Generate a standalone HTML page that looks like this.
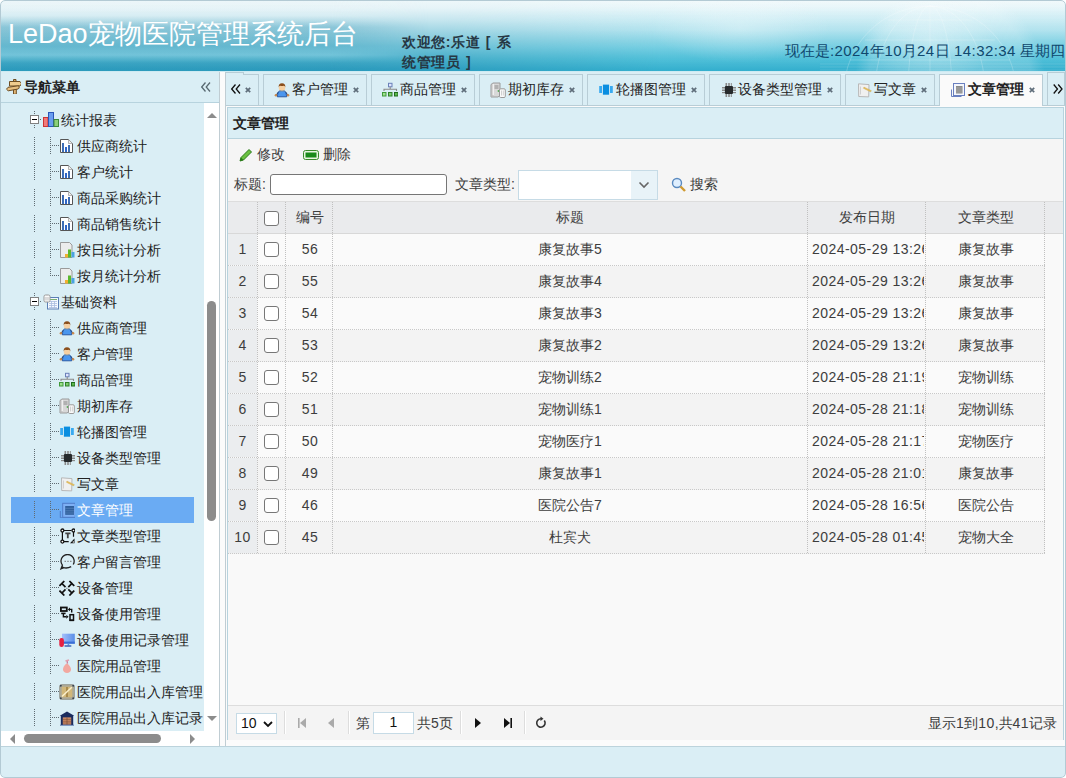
<!DOCTYPE html><html><head><meta charset="utf-8"><style>*{box-sizing:border-box;margin:0;padding:0}
html,body{width:1066px;height:778px;overflow:hidden;background:#fff}
body{font-family:"Liberation Sans",sans-serif;font-size:14px;color:#333;position:relative}
#frame{position:absolute;left:0;top:0;width:1066px;height:778px;border-radius:5px;overflow:hidden;background:#fbfbfb}
#bd{left:0;top:0;width:1066px;height:778px;border:1px solid #b3cad4;border-radius:5px}
#south{left:0;top:746px;width:1066px;height:32px;background:#daeef5;border-top:1px solid #bcd3dc}
#hl{left:0;top:71px;width:1066px;height:1px;background:#cdeaf2}
#cb{left:225px;top:72px;width:1px;height:674px;background:#c0cdd3}
#frame div,#frame span,#frame i{position:absolute;display:block}
#hdr{left:0;top:0;width:1066px;height:71px;
 background:linear-gradient(180deg,#eef8fa 0px,#e6f4f8 8px,#c6e6ef 20px,#9ad3e2 33px,#6cc0d6 48px,#46adc9 60px,#2f9fc0 69px,#2f9fc0 71px)}
#hdrL{left:0;top:0;width:430px;height:71px;background:linear-gradient(180deg,rgba(235,245,248,.3) 0,rgba(230,242,246,.25) 16px,rgba(60,150,180,.3) 27px,rgba(60,150,180,.25) 46px,rgba(200,240,250,.25) 55px,rgba(40,140,175,.15) 63px,rgba(20,120,160,.1) 71px);-webkit-mask-image:linear-gradient(90deg,#000 0,#000 330px,transparent 430px)}
#hdrR{left:440px;top:0;width:626px;height:71px;background:radial-gradient(circle 95px at 510px 80px,rgba(255,255,255,.28),rgba(255,255,255,.18) 85%,rgba(255,255,255,0) 100%),radial-gradient(ellipse 70px 40px at 490px 40px,rgba(255,255,255,.35),rgba(255,255,255,0)),radial-gradient(ellipse 90px 35px at 300px 28px,rgba(255,255,255,.3),rgba(255,255,255,0)),linear-gradient(180deg,rgba(255,255,255,.25) 0,rgba(200,245,252,.4) 30px,rgba(90,210,232,.5) 58px,rgba(60,195,222,.45) 71px);-webkit-mask-image:linear-gradient(90deg,transparent 0,#000 220px)}
#title{left:8px;top:16px;font-size:27px;color:#fff;white-space:nowrap}
#welcome{left:402px;top:32px;width:118px;font-size:14px;font-weight:bold;color:#263845;line-height:20px;letter-spacing:.6px;word-spacing:1px}
#now{left:785px;top:42px;font-size:15px;color:#10486e;white-space:nowrap}
#west{left:0;top:72px;width:220px;height:674px;background:#daeef5;border-right:1px solid #c0cdd3}
#westhd{left:0;top:0;width:219px;height:31px;border-bottom:1px solid #b7d3de}
#westhd .t{left:24px;top:7px;font-weight:bold;font-size:14px;color:#222}
#westhd .coll{left:201px;top:10px;width:10px;height:10px}
.coll svg{display:block}
#tree{left:0;top:31px;width:204px;height:628px;overflow:hidden}
#frame .ic{width:16px;height:16px}
#frame .ic svg{display:block}
.tt{height:26px;line-height:26px;white-space:nowrap;font-size:14px;color:#222}
.tt.on{color:#fff}
.selrow{left:11px;width:183px;height:26px;background:#6aabf3}
#frame i.vd{width:1px;background:repeating-linear-gradient(180deg,#5f6b72 0 1px,transparent 1px 2px)}
#frame i.hd{height:1px;background:repeating-linear-gradient(90deg,#5f6b72 0 1px,transparent 1px 2px)}
#vscroll{left:204px;top:31px;width:15px;height:628px;background:#fff}
#hscroll{left:0;top:659px;width:219px;height:15px;background:#fff}
.vthumb{left:3px;top:198px;width:9px;height:220px;border-radius:5px;background:#8c8c8c}
.hthumb{left:24px;top:3px;width:137px;height:9px;border-radius:5px;background:#8c8c8c}
#frame i.tri{width:0;height:0;border:5px solid transparent}
i.tri.up{left:3px;top:10px;border-bottom:5px solid #8c8c8c !important;border-top-width:0 !important}
i.tri.dn{left:3px;top:613px;border-top:5px solid #8c8c8c !important;border-bottom-width:0 !important}
i.tri.lf{left:10px;top:3px;border-right:5px solid #8c8c8c !important;border-left-width:0 !important}
i.tri.rt{left:190px;top:3px;border-left:5px solid #8c8c8c !important;border-right-width:0 !important}
#tabs{left:226px;top:72px;width:838px;height:674px;border-left:1px solid #b5d0dc}
#panel{left:0;top:34px;width:838px;height:634px;border:1px solid #b7d3de;background:#f9f9f9}
#tabstrip{left:226px;top:72px;width:839px;height:34px;background:#daeef5;border-bottom:1px solid #b8cdd6}
.tab{top:2px;height:31px;background:#daeef5;border:1px solid #b8cdd6;border-bottom:none;white-space:nowrap;font-size:14px;color:#222}
.tab .tx{left:28px;top:6px}
.tab.on{background:#fafafa;height:32px}
.tab.on .tx{font-weight:bold}
.tab .cls{top:12px;width:6px;height:6px}
.tab .cls svg{display:block}
.scl,.scr{top:0;width:18px;height:33px;border:1px solid #b8cdd6;border-bottom:none;background:#daeef5}
.scl .arr,.scr .arr{left:5px;top:11px;width:10px;height:10px}
.arr svg{display:block}
#pn{left:227px;top:107px;width:837px;height:633px;border:1px solid #b7d3de;border-bottom:none;background:#f9f9f9}
#pnhd{left:0;top:0;width:835px;height:31px;background:#daeef5;border-bottom:1px solid #b7d3de}
#pnhd .t{left:5px;top:7px;font-weight:bold;color:#222}
#tb{left:0;top:31px;width:835px;height:63px;background:#f5f5f5;border-bottom:1px solid #ddd}
.tl{white-space:nowrap;font-size:14px;color:#3d3d3d;line-height:20px}
.inp{background:#fff;border:1px solid #767676;border-radius:3px}
.combo{background:#fff;border:1px solid #c6dbe6}
.carr{right:0;top:0;width:26px;height:28px;background:#e8f3f8}
.carr svg{position:absolute;left:7px;top:10px}
#gh{left:0;top:94px;width:835px;height:32px;background:#eaebed;border-bottom:1px solid #d8d8d8}
#frame i.vdd{width:1px;background:repeating-linear-gradient(180deg,#c0c0c0 0 1px,transparent 1px 2px)}
#frame i.hdd{height:1px;background:repeating-linear-gradient(90deg,#c8c8c8 0 1px,transparent 1px 2px)}
.cb{width:15px;height:15px;border:1px solid #777;border-radius:3px;background:#fff}
.gt{top:0;height:31px;line-height:31px;text-align:center;font-size:14px;color:#3d3d3d;white-space:nowrap}
#gb{left:0;top:126px;width:835px;height:471px;background:#f9f9f9}
.gr{left:0;width:817px;height:32px}
.gr.odd{background:#fafafa}
.gr.even{background:#f3f3f3}
.rn{left:0;top:0;width:29px;height:31px;line-height:31px;text-align:center;background:#ebedef;color:#3d3d3d}
.gd{left:584px;top:0;width:112px;height:31px;line-height:31px;overflow:hidden;white-space:nowrap;color:#3d3d3d}
#pg{left:0;top:597px;width:835px;height:35px;background:#f4f4f4;border-top:1px solid #ddd}
.psel{width:41px;height:21px;border:1px solid #c6dbe6;background:#fff}
.psel span{font-size:14px;color:#111}
#frame i.psep{top:6px;width:2px;height:23px;border-left:1px solid #ddd;border-right:1px solid #fff}
.pinp{width:41px;height:22px;border:1px solid #c6dbe6;background:#fff}
.pinp span{left:0;width:39px;top:1px;text-align:center;color:#111}
.pinfo{right:6px;top:8px}

em{font-style:normal}
em.d{letter-spacing:.45px}
em.n{letter-spacing:.4px}
</style></head><body><div id="frame"><div id="hdr"><div id="hdrL"></div><div id="hdrR"></div><svg style="position:absolute;left:820px;top:0" width="246" height="71" viewBox="0 0 246 71"><g fill="none" stroke="#fff" stroke-opacity=".2" stroke-width="1"><circle cx="110" cy="92" r="86"/><ellipse cx="110" cy="92" rx="55" ry="86"/><ellipse cx="110" cy="92" rx="22" ry="86"/><path d="M110 6v70M30 60h160M45 40h130M68 20h84"/></g><g stroke="#fff" stroke-opacity=".12" stroke-width="1"><path d="M0 64h246M0 67h246M0 70h246"/></g></svg>
  <div id="title">LeDao宠物医院管理系统后台</div>
  <div id="welcome">欢迎您:乐道 [ 系统管理员 ]</div>
  <div id="now">现在是<em class="n">:2024</em>年<em class="n">10</em>月<em class="n">24</em>日<em class="n"> 14:32:34 </em>星期四</div>
</div>
<div id="west"><div id="westhd"><span class="ic" style="left:5px;top:6px"><svg width="16" height="16" viewBox="0 0 16 16"><g stroke="#6e4e24" stroke-width="1" stroke-linejoin="round"><rect x="8.5" y="1.5" width="2.5" height="3" fill="#d9a860"/><rect x="8.5" y="11" width="2.8" height="5.2" fill="#e2b878"/><path d="M4.5 3.5h10.5l1.5 2.2-1.5 2.3H4.5z" fill="#f0cc8e"/><path d="M1.5 11.2L3 9.3l10.8-1.6.4 2.3-1 1-10 1.8z" fill="#e8bf80"/></g></svg></span><div class="t">导航菜单</div><div class="coll"><svg width="10" height="10" viewBox="0 0 10 10"><path d="M4.5 .5L.7 5l3.8 4.5M9 .5L5.2 5 9 9.5" fill="none" stroke="#5a6a72" stroke-width="1.3"/></svg></div></div><div id="tree"><span class="ic" style="left:30px;top:12px;width:9px;height:9px"><svg width="9" height="9" viewBox="0 0 9 9"><rect x="0.5" y="0.5" width="8" height="8" fill="#fff" stroke="#808080" stroke-width="1"/><path d="M2 4.5h5" stroke="#000" stroke-width="1"/></svg></span><i class="vd" style="left:34px;top:8px;height:3px"></i><i class="vd" style="left:34px;top:22px;height:3px"></i><i class="hd" style="left:40px;top:16px;width:1px"></i><span class="ic" style="left:43px;top:9px"><svg width="16" height="16" viewBox="0 0 16 16"><rect x="0.5" y="5.5" width="4.5" height="9" fill="#f07a7a" stroke="#c33" stroke-width="1"/><rect x="5.5" y="0.5" width="5" height="14" fill="#6a9ef0" stroke="#2a56b8" stroke-width="1"/><rect x="11" y="7.5" width="4.5" height="7" fill="#8ccf7a" stroke="#3f8a3a" stroke-width="1"/></svg></span><span class="tt" style="left:61px;top:4px">统计报表</span><i class="vd" style="left:34px;top:34px;height:17px"></i><i class="vd" style="left:50px;top:34px;height:17px"></i><i class="hd" style="left:52px;top:42px;width:7px"></i><span class="ic" style="left:59px;top:35px"><svg width="16" height="16" viewBox="0 0 16 16"><path d="M1.5 1.5h8l4 4v9h-12z" fill="#fff" stroke="#555" stroke-width="1"/><path d="M9.5 1.5v4h4" fill="#eee" stroke="#888" stroke-width=".6"/><rect x="3" y="5" width="2" height="9" fill="#3c6db5"/><rect x="6" y="9" width="2" height="5" fill="#2f66c8"/><rect x="9" y="7" width="2" height="7" fill="#3c6db5"/></svg></span><span class="tt" style="left:77px;top:30px">供应商统计</span><i class="vd" style="left:34px;top:60px;height:17px"></i><i class="vd" style="left:50px;top:60px;height:17px"></i><i class="hd" style="left:52px;top:68px;width:7px"></i><span class="ic" style="left:59px;top:61px"><svg width="16" height="16" viewBox="0 0 16 16"><path d="M1.5 1.5h8l4 4v9h-12z" fill="#fff" stroke="#555" stroke-width="1"/><path d="M9.5 1.5v4h4" fill="#eee" stroke="#888" stroke-width=".6"/><rect x="3" y="5" width="2" height="9" fill="#3c6db5"/><rect x="6" y="9" width="2" height="5" fill="#2f66c8"/><rect x="9" y="7" width="2" height="7" fill="#3c6db5"/></svg></span><span class="tt" style="left:77px;top:56px">客户统计</span><i class="vd" style="left:34px;top:86px;height:17px"></i><i class="vd" style="left:50px;top:86px;height:17px"></i><i class="hd" style="left:52px;top:94px;width:7px"></i><span class="ic" style="left:59px;top:87px"><svg width="16" height="16" viewBox="0 0 16 16"><path d="M1.5 1.5h8l4 4v9h-12z" fill="#fff" stroke="#555" stroke-width="1"/><path d="M9.5 1.5v4h4" fill="#eee" stroke="#888" stroke-width=".6"/><rect x="3" y="5" width="2" height="9" fill="#3c6db5"/><rect x="6" y="9" width="2" height="5" fill="#2f66c8"/><rect x="9" y="7" width="2" height="7" fill="#3c6db5"/></svg></span><span class="tt" style="left:77px;top:82px">商品采购统计</span><i class="vd" style="left:34px;top:112px;height:17px"></i><i class="vd" style="left:50px;top:112px;height:17px"></i><i class="hd" style="left:52px;top:120px;width:7px"></i><span class="ic" style="left:59px;top:113px"><svg width="16" height="16" viewBox="0 0 16 16"><path d="M1.5 1.5h8l4 4v9h-12z" fill="#fff" stroke="#555" stroke-width="1"/><path d="M9.5 1.5v4h4" fill="#eee" stroke="#888" stroke-width=".6"/><rect x="3" y="5" width="2" height="9" fill="#3c6db5"/><rect x="6" y="9" width="2" height="5" fill="#2f66c8"/><rect x="9" y="7" width="2" height="7" fill="#3c6db5"/></svg></span><span class="tt" style="left:77px;top:108px">商品销售统计</span><i class="vd" style="left:34px;top:138px;height:17px"></i><i class="vd" style="left:50px;top:138px;height:17px"></i><i class="hd" style="left:52px;top:146px;width:7px"></i><span class="ic" style="left:59px;top:139px"><svg width="16" height="16" viewBox="0 0 16 16"><path d="M1.5 0.5h9l2.5 2.5v12.5h-11.5z" fill="#ececec" stroke="#9a9a9a" stroke-width="1"/><rect x="6" y="12" width="3" height="3.5" fill="#f0b030"/><rect x="9" y="7.5" width="3" height="8" fill="#5cb82e"/><rect x="12.5" y="10" width="3" height="5.5" fill="#4aa3e0"/></svg></span><span class="tt" style="left:77px;top:134px">按日统计分析</span><i class="vd" style="left:34px;top:164px;height:17px"></i><i class="vd" style="left:50px;top:164px;height:9px"></i><i class="hd" style="left:52px;top:172px;width:7px"></i><span class="ic" style="left:59px;top:165px"><svg width="16" height="16" viewBox="0 0 16 16"><path d="M1.5 0.5h9l2.5 2.5v12.5h-11.5z" fill="#ececec" stroke="#9a9a9a" stroke-width="1"/><rect x="6" y="12" width="3" height="3.5" fill="#f0b030"/><rect x="9" y="7.5" width="3" height="8" fill="#5cb82e"/><rect x="12.5" y="10" width="3" height="5.5" fill="#4aa3e0"/></svg></span><span class="tt" style="left:77px;top:160px">按月统计分析</span><span class="ic" style="left:30px;top:194px;width:9px;height:9px"><svg width="9" height="9" viewBox="0 0 9 9"><rect x="0.5" y="0.5" width="8" height="8" fill="#fff" stroke="#808080" stroke-width="1"/><path d="M2 4.5h5" stroke="#000" stroke-width="1"/></svg></span><i class="vd" style="left:34px;top:190px;height:3px"></i><i class="vd" style="left:34px;top:204px;height:3px"></i><i class="hd" style="left:40px;top:198px;width:1px"></i><span class="ic" style="left:43px;top:191px"><svg width="16" height="16" viewBox="0 0 16 16"><rect x="4.5" y="3.5" width="11" height="11.5" fill="#f4f9ff" stroke="#5b7fb5" stroke-width="1"/><path d="M6 5.5h8" stroke="#7ab070"/><path d="M6 7.5h8M6 9.5h8M6 11.5h8M6 13.5h8M8.5 7v7M11.5 7v7" stroke="#a9bde0" stroke-width=".8"/><rect x="1" y="1" width="6" height="7" rx="1.5" fill="#fafafa" stroke="#999" stroke-width="1"/><path d="M3 3v3.5M5 3v3.5" stroke="#bbb"/></svg></span><span class="tt" style="left:61px;top:186px">基础资料</span><i class="vd" style="left:34px;top:216px;height:17px"></i><i class="vd" style="left:50px;top:216px;height:17px"></i><i class="hd" style="left:52px;top:224px;width:7px"></i><span class="ic" style="left:59px;top:217px"><svg width="16" height="16" viewBox="0 0 16 16"><path d="M3.3 14.8l.8-4.6c1-1.2 2.3-1.8 3.9-1.8s2.9.6 3.9 1.8l.8 4.6z" fill="#4a96ee" stroke="#1f4f9c" stroke-width=".9"/><path d="M4.2 10.3l-2.2 3M11.8 10.3l2.2 3" stroke="#24406e" stroke-width="1"/><circle cx="1.9" cy="13.2" r="1.2" fill="#c98a4e"/><circle cx="14.1" cy="13.2" r="1.2" fill="#c98a4e"/><ellipse cx="8" cy="6" rx="3.2" ry="2.9" fill="#f6d0a2"/><path d="M4.6 5.6C4.4 2.7 5.8 1.2 8 1.2s3.6 1.5 3.4 4.4c-.3-1.2-.9-1.6-1.6-1.8-1.2.4-2.6.4-3.6 0-.7.2-1.3.6-1.6 1.8z" fill="#8a4d1a"/><path d="M5.5 9h5" stroke="#7a8a9a" stroke-width=".8"/></svg></span><span class="tt" style="left:77px;top:212px">供应商管理</span><i class="vd" style="left:34px;top:242px;height:17px"></i><i class="vd" style="left:50px;top:242px;height:17px"></i><i class="hd" style="left:52px;top:250px;width:7px"></i><span class="ic" style="left:59px;top:243px"><svg width="16" height="16" viewBox="0 0 16 16"><path d="M3.3 14.8l.8-4.6c1-1.2 2.3-1.8 3.9-1.8s2.9.6 3.9 1.8l.8 4.6z" fill="#4a96ee" stroke="#1f4f9c" stroke-width=".9"/><path d="M4.2 10.3l-2.2 3M11.8 10.3l2.2 3" stroke="#24406e" stroke-width="1"/><circle cx="1.9" cy="13.2" r="1.2" fill="#c98a4e"/><circle cx="14.1" cy="13.2" r="1.2" fill="#c98a4e"/><ellipse cx="8" cy="6" rx="3.2" ry="2.9" fill="#f6d0a2"/><path d="M4.6 5.6C4.4 2.7 5.8 1.2 8 1.2s3.6 1.5 3.4 4.4c-.3-1.2-.9-1.6-1.6-1.8-1.2.4-2.6.4-3.6 0-.7.2-1.3.6-1.6 1.8z" fill="#8a4d1a"/><path d="M5.5 9h5" stroke="#7a8a9a" stroke-width=".8"/></svg></span><span class="tt" style="left:77px;top:238px">客户管理</span><i class="vd" style="left:34px;top:268px;height:17px"></i><i class="vd" style="left:50px;top:268px;height:17px"></i><i class="hd" style="left:52px;top:276px;width:7px"></i><span class="ic" style="left:59px;top:269px"><svg width="16" height="16" viewBox="0 0 16 16"><rect x="6.5" y="1.3" width="3.5" height="3.5" fill="#dde4ff" stroke="#6a80b8" stroke-width="1"/><path d="M8.2 4.8v2.5M2 9V7.3h12.5V9" fill="none" stroke="#8a8a8a" stroke-width="1.1"/><g stroke-width="1"><rect x="0.5" y="10.5" width="3.5" height="3.5" fill="#9ee08e" stroke="#3f9a3a"/><rect x="6.5" y="10.5" width="3.5" height="3.5" fill="#7ccc6c" stroke="#2e802a"/><rect x="12.5" y="10.5" width="3.5" height="3.5" fill="#5cb84e" stroke="#1e6a1c"/></g></svg></span><span class="tt" style="left:77px;top:264px">商品管理</span><i class="vd" style="left:34px;top:294px;height:17px"></i><i class="vd" style="left:50px;top:294px;height:17px"></i><i class="hd" style="left:52px;top:302px;width:7px"></i><span class="ic" style="left:59px;top:295px"><svg width="16" height="16" viewBox="0 0 16 16"><path d="M1 2.5L3 1h7v12.5L8 15H1z" fill="#d8d8d8" stroke="#9a9a9a" stroke-width="1"/><path d="M3 1v12.5L1 15" fill="none" stroke="#b8b8b8" stroke-width=".8"/><path d="M4.5 4h4M4.5 6h4" stroke="#8a8a8a" stroke-width="1"/><path d="M3.3 2v11" stroke="#f4f4f4" stroke-width="1.2"/><circle cx="8.5" cy="9" r=".9" fill="#5a5"/><rect x="9.5" y="6.8" width="5.8" height="8.7" rx="1.2" fill="#fafafa" stroke="#9a9a9a" stroke-width="1"/><path d="M11.5 8.5v5M13.3 8.5v5" stroke="#d0d0d0" stroke-width="1"/></svg></span><span class="tt" style="left:77px;top:290px">期初库存</span><i class="vd" style="left:34px;top:320px;height:17px"></i><i class="vd" style="left:50px;top:320px;height:17px"></i><i class="hd" style="left:52px;top:328px;width:7px"></i><span class="ic" style="left:59px;top:321px"><svg width="16" height="16" viewBox="0 0 16 16"><rect x="1.2" y="4" width="2.8" height="7" fill="#38aaf0"/><rect x="12" y="4" width="2.8" height="7" fill="#38aaf0"/><rect x="4.9" y="2.6" width="6.2" height="10.1" fill="#0a8ee0"/></svg></span><span class="tt" style="left:77px;top:316px">轮播图管理</span><i class="vd" style="left:34px;top:346px;height:17px"></i><i class="vd" style="left:50px;top:346px;height:17px"></i><i class="hd" style="left:52px;top:354px;width:7px"></i><span class="ic" style="left:59px;top:347px"><svg width="16" height="16" viewBox="0 0 16 16"><g fill="#8a8a8a"><rect x="5.5" y="1" width="1.6" height="3"/><rect x="8.2" y="1" width="1.6" height="3"/><rect x="10.8" y="1" width="1" height="3"/><rect x="5.5" y="12" width="1.6" height="3"/><rect x="8.2" y="12" width="1.6" height="3"/><rect x="10.8" y="12" width="1" height="3"/><rect x="2" y="5" width="3" height="1.5"/><rect x="2" y="7.5" width="3" height="1.5"/><rect x="2" y="10" width="3" height="1.2"/><rect x="13" y="5" width="3" height="1.5"/><rect x="13" y="7.5" width="3" height="1.5"/><rect x="13" y="10" width="3" height="1.2"/></g><rect x="4.9" y="4" width="8.1" height="8" rx="1" fill="#262a2c"/></svg></span><span class="tt" style="left:77px;top:342px">设备类型管理</span><i class="vd" style="left:34px;top:372px;height:17px"></i><i class="vd" style="left:50px;top:372px;height:17px"></i><i class="hd" style="left:52px;top:380px;width:7px"></i><span class="ic" style="left:59px;top:373px"><svg width="16" height="16" viewBox="0 0 16 16"><path d="M2.5 1.8l10.5 .8-.3 12.3-10-.4z" fill="#f0f0f0" stroke="#b8b8b8" stroke-width="1"/><path d="M4.5 4.5v8" stroke="#d0d0d0" stroke-width="1"/><path d="M8 5.2l7.3 3.5-.7 1.1-7.2-3.6z" fill="#ecc860" stroke="#caa040" stroke-width=".5"/></svg></span><span class="tt" style="left:77px;top:368px">写文章</span><div class="selrow" style="top:394px"></div><i class="vd" style="left:34px;top:398px;height:17px"></i><i class="vd" style="left:50px;top:398px;height:17px"></i><i class="hd" style="left:52px;top:406px;width:7px"></i><span class="ic" style="left:59px;top:399px"><svg width="16" height="16" viewBox="0 0 16 16"><rect x="3.7" y="1.3" width="12.6" height="14" fill="#7eb0f4" stroke="#4f7cc8" stroke-width="1"/><path d="M1.3 9v6.8h14.9" fill="none" stroke="#4f7cc8" stroke-width="1"/><rect x="6.2" y="4" width="8.8" height="8.8" fill="#2f5f9c"/><path d="M6.2 6.3h8.8M6.2 8.8h8.8M6.2 11h8.8" stroke="#5a86bd" stroke-width=".7"/></svg></span><span class="tt on" style="left:77px;top:394px">文章管理</span><i class="vd" style="left:34px;top:424px;height:17px"></i><i class="vd" style="left:50px;top:424px;height:17px"></i><i class="hd" style="left:52px;top:432px;width:7px"></i><span class="ic" style="left:59px;top:425px"><svg width="16" height="16" viewBox="0 0 16 16"><g fill="none" stroke="#111" stroke-width="1.2"><path d="M3.4 2.5h9.1M3.4 2.5v11.1M3.4 13.6h6.3M14.5 2.5v6.2"/></g><g fill="#fff" stroke="#111" stroke-width="1.3"><circle cx="3.4" cy="2.5" r="1.5"/><circle cx="14.5" cy="2.5" r="1.5"/><circle cx="3.4" cy="13.6" r="1.5"/></g><path d="M11 15.2h4.5v-4.6z" fill="#111"/><circle cx="14.3" cy="14" r=".7" fill="#fff"/><path d="M6.3 5.3h5.2M8.8 5.3v5" stroke="#444" stroke-width="1.8"/></svg></span><span class="tt" style="left:77px;top:420px">文章类型管理</span><i class="vd" style="left:34px;top:450px;height:17px"></i><i class="vd" style="left:50px;top:450px;height:17px"></i><i class="hd" style="left:52px;top:458px;width:7px"></i><span class="ic" style="left:59px;top:451px"><svg width="16" height="16" viewBox="0 0 16 16"><path d="M14.2 10.5A6.6 6.6 0 1 0 3.4 11.2L2 14.8 4.6 13.6Q8 14.8 12.2 12.6" fill="none" stroke="#222" stroke-width="1.3"/><path d="M2 14.8l1.6-3 1.5 2.2z" fill="#222"/><path d="M5.6 7.4h1.2M8.4 7.4h1.2M11.2 7.4h1.2" stroke="#777" stroke-width="1.1"/></svg></span><span class="tt" style="left:77px;top:446px">客户留言管理</span><i class="vd" style="left:34px;top:476px;height:17px"></i><i class="vd" style="left:50px;top:476px;height:17px"></i><i class="hd" style="left:52px;top:484px;width:7px"></i><span class="ic" style="left:59px;top:477px"><svg width="16" height="16" viewBox="0 0 16 16"><g stroke="#111" stroke-width="1.7" fill="none" stroke-linecap="square"><path d="M1 5.3L4.7 1.6M2.9 3.5l3 3"/><path d="M11 1.6l3.7 3.7M12.9 3.5l-3 3"/><path d="M1 11.2l3.7 3.7M2.9 13l3-3"/><path d="M11 14.9l3.7-3.7M12.9 13l-3-3"/></g><rect x="7.3" y="7.7" width="1.2" height="1.2" fill="#777"/></svg></span><span class="tt" style="left:77px;top:472px">设备管理</span><i class="vd" style="left:34px;top:502px;height:17px"></i><i class="vd" style="left:50px;top:502px;height:17px"></i><i class="hd" style="left:52px;top:510px;width:7px"></i><span class="ic" style="left:59px;top:503px"><svg width="16" height="16" viewBox="0 0 16 16"><g fill="none" stroke="#111"><rect x="1.9" y="1.5" width="5.9" height="3.5" stroke-width="1.8"/><path d="M2.2 7.4h4.4" stroke-width="1.6"/><rect x="11" y="8.7" width="3.5" height="5.6" stroke-width="1.5"/><path d="M10.6 3.4h2.1v3" stroke-width="1.4"/><path d="M4.4 8v2.8h3" stroke-width="1.4"/></g><path d="M8.8 3.4l2.2-1.9v3.8z" fill="#111"/><path d="M9.6 10.8L7.3 8.9v3.8z" fill="#111"/><rect x="10.5" y="13.5" width="4.4" height="1.6" fill="#111"/></svg></span><span class="tt" style="left:77px;top:498px">设备使用管理</span><i class="vd" style="left:34px;top:528px;height:17px"></i><i class="vd" style="left:50px;top:528px;height:17px"></i><i class="hd" style="left:52px;top:536px;width:7px"></i><span class="ic" style="left:59px;top:529px"><svg width="16" height="16" viewBox="0 0 16 16"><defs><linearGradient id="mg" x1="0" x2="1"><stop offset="0" stop-color="#a4c0fa"/><stop offset="1" stop-color="#5a8ee8"/></linearGradient></defs><rect x="3" y="1.7" width="12.8" height="10" fill="url(#mg)"/><rect x="3" y="9.6" width="12.8" height="2.1" fill="#3a6ed4"/><path d="M9.4 11.7v1.8" stroke="#5a8ee8" stroke-width="1.6"/><rect x="5.3" y="13.2" width="7.2" height="1.6" rx=".8" fill="#3a62b8"/><rect x="0.3" y="6" width="4.6" height="9" rx="2.2" fill="#e62040"/></svg></span><span class="tt" style="left:77px;top:524px">设备使用记录管理</span><i class="vd" style="left:34px;top:554px;height:17px"></i><i class="vd" style="left:50px;top:554px;height:17px"></i><i class="hd" style="left:52px;top:562px;width:7px"></i><span class="ic" style="left:59px;top:555px"><svg width="16" height="16" viewBox="0 0 16 16"><path d="M7.5 5.5C5 7.5 4 9.5 4 11.5 4 13.5 6 15 8 15s4-1.5 4-3.5c0-2-1.5-4-3.5-6z" fill="#f2a8a0"/><path d="M8.5 5.5L8 2.5" stroke="#c87a9a" stroke-width="1.3"/><path d="M6.5 3l3.5-1" stroke="#e0a0b0" stroke-width="1.6"/></svg></span><span class="tt" style="left:77px;top:550px">医院用品管理</span><i class="vd" style="left:34px;top:580px;height:17px"></i><i class="vd" style="left:50px;top:580px;height:17px"></i><i class="hd" style="left:52px;top:588px;width:7px"></i><span class="ic" style="left:59px;top:581px"><svg width="16" height="16" viewBox="0 0 16 16"><rect x="0.8" y="0.8" width="14.4" height="14.4" rx="1.5" fill="#b8b4a0" stroke="#8a8a80" stroke-width="1"/><rect x="2.8" y="2.8" width="10.4" height="10.4" fill="#a88a4c"/><path d="M4 3v10M6 3v10M10 3v10M12 3v10" stroke="#f2dca0" stroke-width="1.1"/><path d="M3 12.5L12.8 3.2" stroke="#fbf0cc" stroke-width="1.5"/><g fill="#3a4450"><circle cx="1.8" cy="1.8" r="1"/><circle cx="14.2" cy="1.8" r="1"/><circle cx="1.8" cy="14.2" r="1"/><circle cx="14.2" cy="14.2" r="1"/></g></svg></span><span class="tt" style="left:77px;top:576px">医院用品出入库管理</span><i class="vd" style="left:34px;top:606px;height:17px"></i><i class="vd" style="left:50px;top:606px;height:17px"></i><i class="hd" style="left:52px;top:614px;width:7px"></i><span class="ic" style="left:59px;top:607px"><svg width="16" height="16" viewBox="0 0 16 16"><path d="M0.8 5.8L8 1.6l7.2 4.2-1 .3V15H1.8V6.1z" fill="#1b2c5e"/><rect x="3.8" y="7.4" width="8.4" height="7.3" fill="#d4906a"/><path d="M3.8 9.3h8.4M3.8 11.2h8.4M3.8 13h8.4M8 7.4v7.3" stroke="#7a4a30" stroke-width=".7"/><path d="M1 15.2h14" stroke="#3a5a9a" stroke-width=".8"/></svg></span><span class="tt" style="left:77px;top:602px">医院用品出入库记录</span></div><div id="vscroll"><i class="tri up"></i><div class="vthumb"></div><i class="tri dn"></i></div>
<div id="hscroll"><i class="tri lf"></i><div class="hthumb"></div><i class="tri rt"></i></div>
</div><div id="tabstrip"><div class="scl" style="left:-1px;width:19px"><span class="arr"><svg width="10" height="10" viewBox="0 0 10 10"><path d="M4.5 .5L.7 5l3.8 4.5M9 .5L5.2 5 9 9.5" fill="none" stroke="#111" stroke-width="1.3"/></svg></span></div><div class="tab" style="left:17px;width:16px;border-left:none"><span class="cls" style="left:2px"><svg width="6" height="6" viewBox="0 0 6 6"><path d="M.8 .8l4.4 4.4M5.2 .8L.8 5.2" stroke="#5f6d7a" stroke-width="1.7"/></svg></span></div><div class="tab" style="left:37px;width:104px"><span class="ic" style="left:10px;top:7px"><svg width="16" height="16" viewBox="0 0 16 16"><path d="M3.3 14.8l.8-4.6c1-1.2 2.3-1.8 3.9-1.8s2.9.6 3.9 1.8l.8 4.6z" fill="#4a96ee" stroke="#1f4f9c" stroke-width=".9"/><path d="M4.2 10.3l-2.2 3M11.8 10.3l2.2 3" stroke="#24406e" stroke-width="1"/><circle cx="1.9" cy="13.2" r="1.2" fill="#c98a4e"/><circle cx="14.1" cy="13.2" r="1.2" fill="#c98a4e"/><ellipse cx="8" cy="6" rx="3.2" ry="2.9" fill="#f6d0a2"/><path d="M4.6 5.6C4.4 2.7 5.8 1.2 8 1.2s3.6 1.5 3.4 4.4c-.3-1.2-.9-1.6-1.6-1.8-1.2.4-2.6.4-3.6 0-.7.2-1.3.6-1.6 1.8z" fill="#8a4d1a"/><path d="M5.5 9h5" stroke="#7a8a9a" stroke-width=".8"/></svg></span><span class="tx">客户管理</span><span class="cls" style="left:89px"><svg width="6" height="6" viewBox="0 0 6 6"><path d="M.8 .8l4.4 4.4M5.2 .8L.8 5.2" stroke="#5f6d7a" stroke-width="1.7"/></svg></span></div><div class="tab" style="left:145px;width:104px"><span class="ic" style="left:10px;top:7px"><svg width="16" height="16" viewBox="0 0 16 16"><rect x="6.5" y="1.3" width="3.5" height="3.5" fill="#dde4ff" stroke="#6a80b8" stroke-width="1"/><path d="M8.2 4.8v2.5M2 9V7.3h12.5V9" fill="none" stroke="#8a8a8a" stroke-width="1.1"/><g stroke-width="1"><rect x="0.5" y="10.5" width="3.5" height="3.5" fill="#9ee08e" stroke="#3f9a3a"/><rect x="6.5" y="10.5" width="3.5" height="3.5" fill="#7ccc6c" stroke="#2e802a"/><rect x="12.5" y="10.5" width="3.5" height="3.5" fill="#5cb84e" stroke="#1e6a1c"/></g></svg></span><span class="tx">商品管理</span><span class="cls" style="left:89px"><svg width="6" height="6" viewBox="0 0 6 6"><path d="M.8 .8l4.4 4.4M5.2 .8L.8 5.2" stroke="#5f6d7a" stroke-width="1.7"/></svg></span></div><div class="tab" style="left:253px;width:104px"><span class="ic" style="left:10px;top:7px"><svg width="16" height="16" viewBox="0 0 16 16"><path d="M1 2.5L3 1h7v12.5L8 15H1z" fill="#d8d8d8" stroke="#9a9a9a" stroke-width="1"/><path d="M3 1v12.5L1 15" fill="none" stroke="#b8b8b8" stroke-width=".8"/><path d="M4.5 4h4M4.5 6h4" stroke="#8a8a8a" stroke-width="1"/><path d="M3.3 2v11" stroke="#f4f4f4" stroke-width="1.2"/><circle cx="8.5" cy="9" r=".9" fill="#5a5"/><rect x="9.5" y="6.8" width="5.8" height="8.7" rx="1.2" fill="#fafafa" stroke="#9a9a9a" stroke-width="1"/><path d="M11.5 8.5v5M13.3 8.5v5" stroke="#d0d0d0" stroke-width="1"/></svg></span><span class="tx">期初库存</span><span class="cls" style="left:89px"><svg width="6" height="6" viewBox="0 0 6 6"><path d="M.8 .8l4.4 4.4M5.2 .8L.8 5.2" stroke="#5f6d7a" stroke-width="1.7"/></svg></span></div><div class="tab" style="left:361px;width:118px"><span class="ic" style="left:10px;top:7px"><svg width="16" height="16" viewBox="0 0 16 16"><rect x="1.2" y="4" width="2.8" height="7" fill="#38aaf0"/><rect x="12" y="4" width="2.8" height="7" fill="#38aaf0"/><rect x="4.9" y="2.6" width="6.2" height="10.1" fill="#0a8ee0"/></svg></span><span class="tx">轮播图管理</span><span class="cls" style="left:103px"><svg width="6" height="6" viewBox="0 0 6 6"><path d="M.8 .8l4.4 4.4M5.2 .8L.8 5.2" stroke="#5f6d7a" stroke-width="1.7"/></svg></span></div><div class="tab" style="left:483px;width:132px"><span class="ic" style="left:10px;top:7px"><svg width="16" height="16" viewBox="0 0 16 16"><g fill="#8a8a8a"><rect x="5.5" y="1" width="1.6" height="3"/><rect x="8.2" y="1" width="1.6" height="3"/><rect x="10.8" y="1" width="1" height="3"/><rect x="5.5" y="12" width="1.6" height="3"/><rect x="8.2" y="12" width="1.6" height="3"/><rect x="10.8" y="12" width="1" height="3"/><rect x="2" y="5" width="3" height="1.5"/><rect x="2" y="7.5" width="3" height="1.5"/><rect x="2" y="10" width="3" height="1.2"/><rect x="13" y="5" width="3" height="1.5"/><rect x="13" y="7.5" width="3" height="1.5"/><rect x="13" y="10" width="3" height="1.2"/></g><rect x="4.9" y="4" width="8.1" height="8" rx="1" fill="#262a2c"/></svg></span><span class="tx">设备类型管理</span><span class="cls" style="left:117px"><svg width="6" height="6" viewBox="0 0 6 6"><path d="M.8 .8l4.4 4.4M5.2 .8L.8 5.2" stroke="#5f6d7a" stroke-width="1.7"/></svg></span></div><div class="tab" style="left:619px;width:90px"><span class="ic" style="left:10px;top:7px"><svg width="16" height="16" viewBox="0 0 16 16"><path d="M2.5 1.8l10.5 .8-.3 12.3-10-.4z" fill="#f0f0f0" stroke="#b8b8b8" stroke-width="1"/><path d="M4.5 4.5v8" stroke="#d0d0d0" stroke-width="1"/><path d="M8 5.2l7.3 3.5-.7 1.1-7.2-3.6z" fill="#ecc860" stroke="#caa040" stroke-width=".5"/></svg></span><span class="tx">写文章</span><span class="cls" style="left:75px"><svg width="6" height="6" viewBox="0 0 6 6"><path d="M.8 .8l4.4 4.4M5.2 .8L.8 5.2" stroke="#5f6d7a" stroke-width="1.7"/></svg></span></div><div class="tab on" style="left:713px;width:104px"><span class="ic" style="left:10px;top:7px"><svg width="16" height="16" viewBox="0 0 16 16"><rect x="3.5" y="1.5" width="11" height="12" fill="#f4f6fc" stroke="#6a80c0" stroke-width="1"/><path d="M1.5 7.5v7h10" fill="none" stroke="#6a80c0" stroke-width="1"/><rect x="6" y="4" width="6.5" height="7.5" fill="#8a8a8a"/><path d="M6 6h6.5M6 8h6.5M6 10h6.5" stroke="#b8b8b8" stroke-width=".6"/></svg></span><span class="tx">文章管理</span><span class="cls" style="left:89px"><svg width="6" height="6" viewBox="0 0 6 6"><path d="M.8 .8l4.4 4.4M5.2 .8L.8 5.2" stroke="#5f6d7a" stroke-width="1.7"/></svg></span></div><div class="scr" style="left:821px"><span class="arr"><svg width="10" height="10" viewBox="0 0 10 10"><path d="M.7 .5L4.5 5 .7 9.5M5.2 .5L9 5 5.2 9.5" fill="none" stroke="#111" stroke-width="1.3"/></svg></span></div></div><div id="pn"><div id="pnhd"><span class="t">文章管理</span></div><div id="tb"><span class="ic" style="left:10px;top:8px"><svg width="16" height="16" viewBox="0 0 16 16"><path d="M2 14l1-3.5 8-8 2.5 2.5-8 8z" fill="#6ac040" stroke="#2a7a1a" stroke-width="1"/><path d="M2 14l1-3.5 2.5 2.5z" fill="#2a7a1a"/></svg></span><span class="tl" style="left:29px;top:5px">修改</span><span class="ic" style="left:75px;top:8px"><svg width="16" height="16" viewBox="0 0 16 16"><rect x="0.5" y="3.5" width="15" height="9" rx="2" fill="#e8f5e0" stroke="#3a8a2a" stroke-width="1"/><rect x="2.5" y="5.5" width="11" height="5" fill="#1a8a1a"/></svg></span><span class="tl" style="left:95px;top:5px">删除</span><span class="tl" style="left:6px;top:35px">标题:</span><div class="inp" style="left:42px;top:35px;width:177px;height:21px"></div><span class="tl" style="left:227px;top:35px">文章类型:</span><div class="combo" style="left:290px;top:31px;width:140px;height:30px"><div class="carr"><svg width="12" height="8" viewBox="0 0 12 8"><path d="M1.5 1.5l4.5 4.5 4.5-4.5" fill="none" stroke="#666" stroke-width="1.6"/></svg></div></div><span class="ic" style="left:443px;top:38px"><svg width="16" height="16" viewBox="0 0 16 16"><circle cx="6" cy="6" r="4.5" fill="#dfefff" stroke="#5a8ac0" stroke-width="1.4"/><path d="M9.5 9.5l4.5 4.5" stroke="#d09a30" stroke-width="2.4"/></svg></span><span class="tl" style="left:462px;top:35px">搜索</span></div><div id="gh"><i class="vdd" style="left:29px;top:0;height:32px"></i><i class="vdd" style="left:57px;top:0;height:32px"></i><i class="vdd" style="left:104px;top:0;height:32px"></i><i class="vdd" style="left:579px;top:0;height:32px"></i><i class="vdd" style="left:697px;top:0;height:32px"></i><i class="vdd" style="left:816px;top:0;height:32px"></i><span class="cb" style="left:36px;top:9px"></span><span class="gt" style="left:58px;width:48px">编号</span><span class="gt" style="left:105px;width:474px">标题</span><span class="gt" style="left:580px;width:118px">发布日期</span><span class="gt" style="left:698px;width:119px">文章类型</span></div><div id="gb"><div class="gr odd" style="top:0px"><span class="rn"><em class="d">1</em></span><span class="cb" style="left:36px;top:8px"></span><span class="gt" style="left:58px;width:48px"><em class="d">56</em></span><span class="gt" style="left:105px;width:474px">康复故事<em class="d">5</em></span><span class="gd"><em class="d">2024-05-29 13:26</em></span><span class="gt" style="left:698px;width:119px">康复故事</span><i class="vdd" style="left:29px;top:0;height:32px"></i><i class="vdd" style="left:57px;top:0;height:32px"></i><i class="vdd" style="left:104px;top:0;height:32px"></i><i class="vdd" style="left:579px;top:0;height:32px"></i><i class="vdd" style="left:697px;top:0;height:32px"></i><i class="vdd" style="left:816px;top:0;height:32px"></i><i class="hdd" style="left:0;top:31px;width:817px"></i></div><div class="gr even" style="top:32px"><span class="rn"><em class="d">2</em></span><span class="cb" style="left:36px;top:8px"></span><span class="gt" style="left:58px;width:48px"><em class="d">55</em></span><span class="gt" style="left:105px;width:474px">康复故事<em class="d">4</em></span><span class="gd"><em class="d">2024-05-29 13:26</em></span><span class="gt" style="left:698px;width:119px">康复故事</span><i class="vdd" style="left:29px;top:0;height:32px"></i><i class="vdd" style="left:57px;top:0;height:32px"></i><i class="vdd" style="left:104px;top:0;height:32px"></i><i class="vdd" style="left:579px;top:0;height:32px"></i><i class="vdd" style="left:697px;top:0;height:32px"></i><i class="vdd" style="left:816px;top:0;height:32px"></i><i class="hdd" style="left:0;top:31px;width:817px"></i></div><div class="gr odd" style="top:64px"><span class="rn"><em class="d">3</em></span><span class="cb" style="left:36px;top:8px"></span><span class="gt" style="left:58px;width:48px"><em class="d">54</em></span><span class="gt" style="left:105px;width:474px">康复故事<em class="d">3</em></span><span class="gd"><em class="d">2024-05-29 13:26</em></span><span class="gt" style="left:698px;width:119px">康复故事</span><i class="vdd" style="left:29px;top:0;height:32px"></i><i class="vdd" style="left:57px;top:0;height:32px"></i><i class="vdd" style="left:104px;top:0;height:32px"></i><i class="vdd" style="left:579px;top:0;height:32px"></i><i class="vdd" style="left:697px;top:0;height:32px"></i><i class="vdd" style="left:816px;top:0;height:32px"></i><i class="hdd" style="left:0;top:31px;width:817px"></i></div><div class="gr even" style="top:96px"><span class="rn"><em class="d">4</em></span><span class="cb" style="left:36px;top:8px"></span><span class="gt" style="left:58px;width:48px"><em class="d">53</em></span><span class="gt" style="left:105px;width:474px">康复故事<em class="d">2</em></span><span class="gd"><em class="d">2024-05-29 13:26</em></span><span class="gt" style="left:698px;width:119px">康复故事</span><i class="vdd" style="left:29px;top:0;height:32px"></i><i class="vdd" style="left:57px;top:0;height:32px"></i><i class="vdd" style="left:104px;top:0;height:32px"></i><i class="vdd" style="left:579px;top:0;height:32px"></i><i class="vdd" style="left:697px;top:0;height:32px"></i><i class="vdd" style="left:816px;top:0;height:32px"></i><i class="hdd" style="left:0;top:31px;width:817px"></i></div><div class="gr odd" style="top:128px"><span class="rn"><em class="d">5</em></span><span class="cb" style="left:36px;top:8px"></span><span class="gt" style="left:58px;width:48px"><em class="d">52</em></span><span class="gt" style="left:105px;width:474px">宠物训练<em class="d">2</em></span><span class="gd"><em class="d">2024-05-28 21:19</em></span><span class="gt" style="left:698px;width:119px">宠物训练</span><i class="vdd" style="left:29px;top:0;height:32px"></i><i class="vdd" style="left:57px;top:0;height:32px"></i><i class="vdd" style="left:104px;top:0;height:32px"></i><i class="vdd" style="left:579px;top:0;height:32px"></i><i class="vdd" style="left:697px;top:0;height:32px"></i><i class="vdd" style="left:816px;top:0;height:32px"></i><i class="hdd" style="left:0;top:31px;width:817px"></i></div><div class="gr even" style="top:160px"><span class="rn"><em class="d">6</em></span><span class="cb" style="left:36px;top:8px"></span><span class="gt" style="left:58px;width:48px"><em class="d">51</em></span><span class="gt" style="left:105px;width:474px">宠物训练<em class="d">1</em></span><span class="gd"><em class="d">2024-05-28 21:18</em></span><span class="gt" style="left:698px;width:119px">宠物训练</span><i class="vdd" style="left:29px;top:0;height:32px"></i><i class="vdd" style="left:57px;top:0;height:32px"></i><i class="vdd" style="left:104px;top:0;height:32px"></i><i class="vdd" style="left:579px;top:0;height:32px"></i><i class="vdd" style="left:697px;top:0;height:32px"></i><i class="vdd" style="left:816px;top:0;height:32px"></i><i class="hdd" style="left:0;top:31px;width:817px"></i></div><div class="gr odd" style="top:192px"><span class="rn"><em class="d">7</em></span><span class="cb" style="left:36px;top:8px"></span><span class="gt" style="left:58px;width:48px"><em class="d">50</em></span><span class="gt" style="left:105px;width:474px">宠物医疗<em class="d">1</em></span><span class="gd"><em class="d">2024-05-28 21:17</em></span><span class="gt" style="left:698px;width:119px">宠物医疗</span><i class="vdd" style="left:29px;top:0;height:32px"></i><i class="vdd" style="left:57px;top:0;height:32px"></i><i class="vdd" style="left:104px;top:0;height:32px"></i><i class="vdd" style="left:579px;top:0;height:32px"></i><i class="vdd" style="left:697px;top:0;height:32px"></i><i class="vdd" style="left:816px;top:0;height:32px"></i><i class="hdd" style="left:0;top:31px;width:817px"></i></div><div class="gr even" style="top:224px"><span class="rn"><em class="d">8</em></span><span class="cb" style="left:36px;top:8px"></span><span class="gt" style="left:58px;width:48px"><em class="d">49</em></span><span class="gt" style="left:105px;width:474px">康复故事<em class="d">1</em></span><span class="gd"><em class="d">2024-05-28 21:01</em></span><span class="gt" style="left:698px;width:119px">康复故事</span><i class="vdd" style="left:29px;top:0;height:32px"></i><i class="vdd" style="left:57px;top:0;height:32px"></i><i class="vdd" style="left:104px;top:0;height:32px"></i><i class="vdd" style="left:579px;top:0;height:32px"></i><i class="vdd" style="left:697px;top:0;height:32px"></i><i class="vdd" style="left:816px;top:0;height:32px"></i><i class="hdd" style="left:0;top:31px;width:817px"></i></div><div class="gr odd" style="top:256px"><span class="rn"><em class="d">9</em></span><span class="cb" style="left:36px;top:8px"></span><span class="gt" style="left:58px;width:48px"><em class="d">46</em></span><span class="gt" style="left:105px;width:474px">医院公告<em class="d">7</em></span><span class="gd"><em class="d">2024-05-28 16:56</em></span><span class="gt" style="left:698px;width:119px">医院公告</span><i class="vdd" style="left:29px;top:0;height:32px"></i><i class="vdd" style="left:57px;top:0;height:32px"></i><i class="vdd" style="left:104px;top:0;height:32px"></i><i class="vdd" style="left:579px;top:0;height:32px"></i><i class="vdd" style="left:697px;top:0;height:32px"></i><i class="vdd" style="left:816px;top:0;height:32px"></i><i class="hdd" style="left:0;top:31px;width:817px"></i></div><div class="gr even" style="top:288px"><span class="rn"><em class="d">10</em></span><span class="cb" style="left:36px;top:8px"></span><span class="gt" style="left:58px;width:48px"><em class="d">45</em></span><span class="gt" style="left:105px;width:474px">杜宾犬</span><span class="gd"><em class="d">2024-05-28 01:45</em></span><span class="gt" style="left:698px;width:119px">宠物大全</span><i class="vdd" style="left:29px;top:0;height:32px"></i><i class="vdd" style="left:57px;top:0;height:32px"></i><i class="vdd" style="left:104px;top:0;height:32px"></i><i class="vdd" style="left:579px;top:0;height:32px"></i><i class="vdd" style="left:697px;top:0;height:32px"></i><i class="vdd" style="left:816px;top:0;height:32px"></i><i class="hdd" style="left:0;top:31px;width:817px"></i></div></div><div id="pg"><div style="left:-1px;top:-1px;width:836px;height:35px"><div class="psel" style="left:9px;top:8px"><span style="left:4px;top:1px">10</span><svg style="position:absolute;left:26px;top:7px" width="10" height="7" viewBox="0 0 10 7"><path d="M1 1l4 4 4-4" fill="none" stroke="#111" stroke-width="1.8"/></svg></div><i class="psep" style="left:57px"></i><span class="ic" style="left:67px;top:10px"><svg width="16" height="16" viewBox="0 0 16 16"><rect x="4" y="3" width="1.6" height="10" fill="#aaa"/><path d="M12 3v10L6 8z" fill="#aaa"/></svg></span><span class="ic" style="left:97px;top:10px"><svg width="16" height="16" viewBox="0 0 16 16"><path d="M10 3v10L4 8z" fill="#aaa"/></svg></span><i class="psep" style="left:121px"></i><span class="tl" style="left:129px;top:8px">第</span><div class="pinp" style="left:146px;top:7px"><span>1</span></div><span class="tl" style="left:190px;top:8px">共5页</span><i class="psep" style="left:233px"></i><span class="ic" style="left:243px;top:10px"><svg width="16" height="16" viewBox="0 0 16 16"><path d="M5 3v10l6-5z" fill="#111"/></svg></span><span class="ic" style="left:273px;top:10px"><svg width="16" height="16" viewBox="0 0 16 16"><path d="M4 3v10l6-5z" fill="#111"/><rect x="10.4" y="3" width="1.6" height="10" fill="#111"/></svg></span><i class="psep" style="left:297px"></i><span class="ic" style="left:306px;top:10px"><svg width="16" height="16" viewBox="0 0 16 16"><path d="M11.3 5.5A4.2 4.2 0 1 1 8 3.8" fill="none" stroke="#333" stroke-width="1.6"/><path d="M7.5 1.5l3 2.3-3 2.2z" fill="#333"/></svg></span><span class="tl pinfo">显示<em class="d">1</em>到<em class="d">10</em>,共<em class="d">41</em>记录</span></div></div></div><div id="south"></div><div id="hl"></div><div id="cb"></div><div id="bd"></div></div></body></html>
